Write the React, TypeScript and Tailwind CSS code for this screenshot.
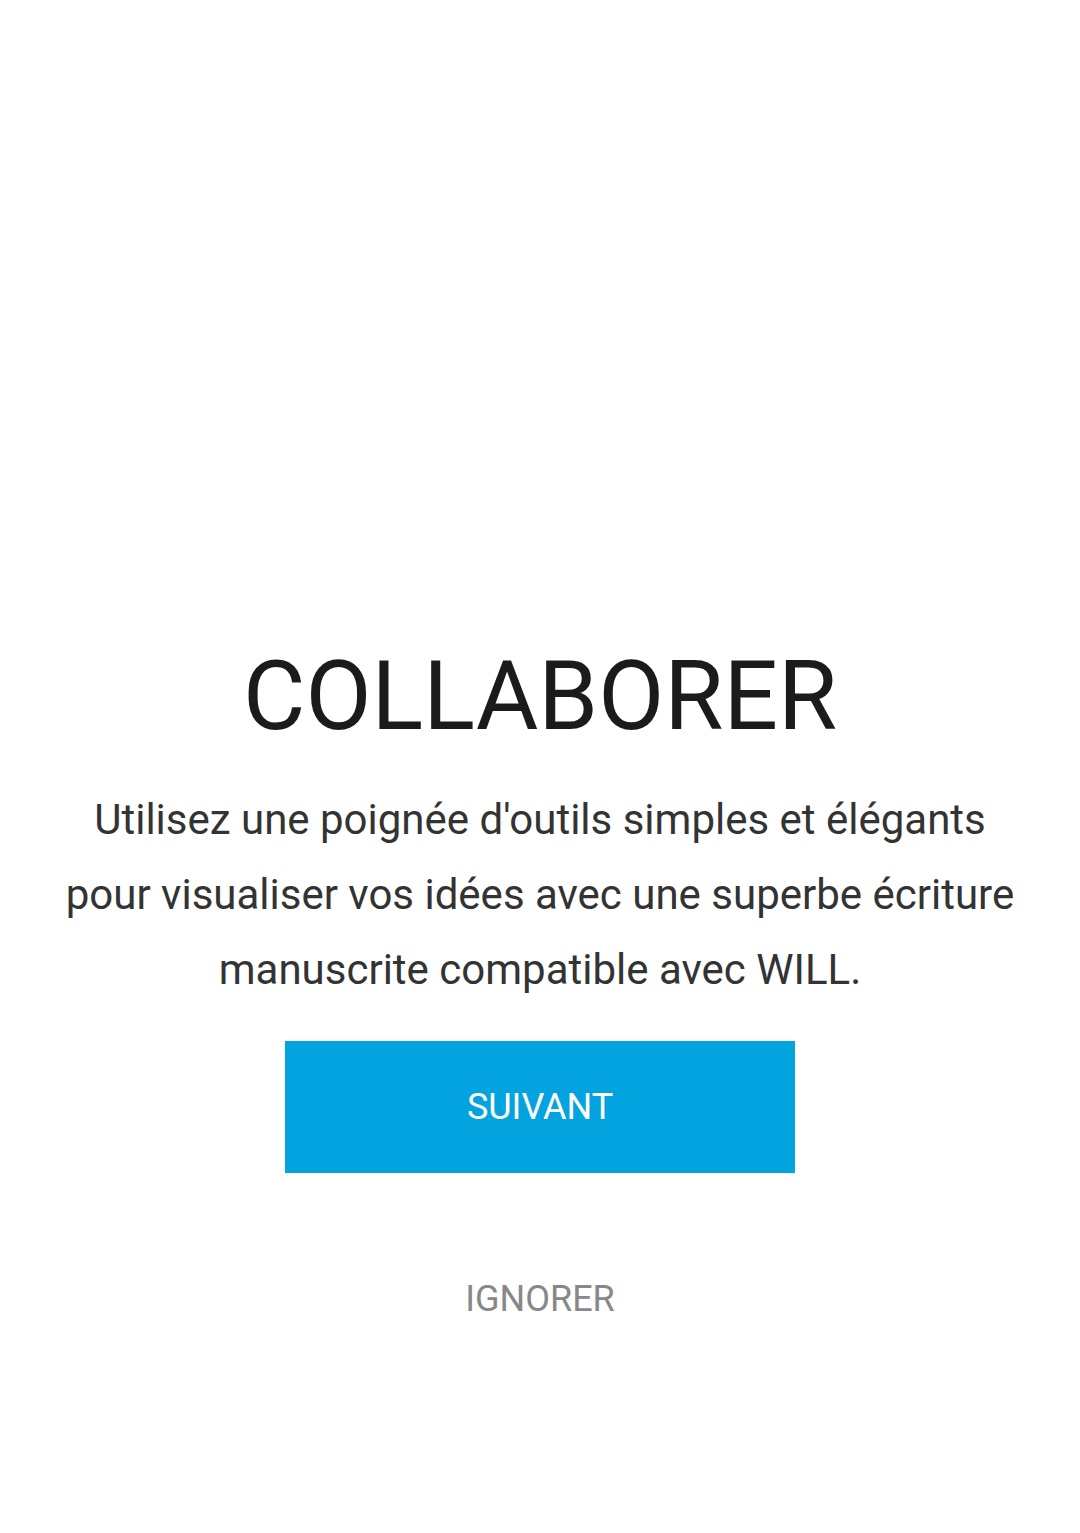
export default function App() {
  return (
    <div className="w-[1080px] h-[1533px] bg-white flex flex-col items-center" style={{ fontFamily: "Roboto, 'Noto Sans', sans-serif" }}>
      <h1 className="mt-[648px] text-[96px] leading-[96px] text-[#1b1b1b] font-normal tracking-normal">COLLABORER</h1>
      <p className="mt-[38px] px-[40px] text-center text-[42px] leading-[75px] text-[#333333]">
        Utilisez une poignée d'outils simples et élégants
        <br />
        pour visualiser vos idées avec une superbe écriture
        <br />
        manuscrite compatible avec WILL.
      </p>
      <button className="mt-[34px] w-[510px] h-[132px] bg-[#03a3e0] text-white text-[36px] leading-none flex items-center justify-center">
        SUIVANT
      </button>
      <div className="mt-[108px] text-[36px] leading-[36px] text-[#888888]">IGNORER</div>
    </div>
  );
}
